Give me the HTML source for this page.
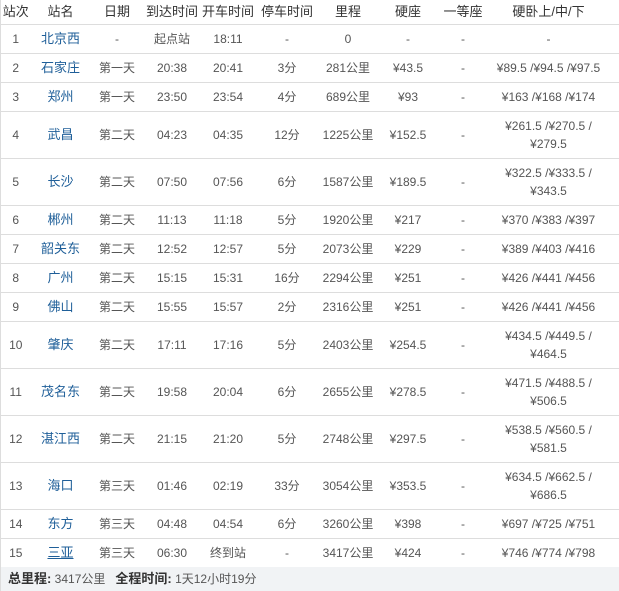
<!DOCTYPE html>
<html><head><meta charset="utf-8">
<style>
*{margin:0;padding:0;box-sizing:border-box}
body{width:619px;height:591px;background:#fff;overflow:hidden;font-family:"Liberation Sans","Noto Sans CJK SC",sans-serif;font-size:12px;color:#555}
table{border-collapse:collapse;table-layout:fixed;width:619px;border-left:1px solid #ddd}
td,th{text-align:center;vertical-align:middle;border-bottom:1px solid #ddd;font-weight:normal;padding:0;line-height:18px;white-space:nowrap}
th{height:24px;color:#333;font-size:13px}
tr.s td{height:29px}
tr.d td{height:47px}
a{color:#1f5f99;text-decoration:none;font-size:13px}
.foot{position:absolute;left:0;top:567px;width:619px;height:24px;background:#f1f3f5;border-left:1px solid #ddd;padding-left:7px;line-height:24px;color:#555;font-size:12px}
.foot b{color:#333;font-size:13px}
</style></head><body>
<table>
<colgroup><col style="width:30px"><col style="width:60px"><col style="width:53px"><col style="width:57px"><col style="width:55px"><col style="width:63px"><col style="width:59px"><col style="width:61px"><col style="width:49px"><col style="width:122px"><col style="width:10px"></colgroup>
<tr><th>站次</th><th>站名</th><th>日期</th><th>到达时间</th><th>开车时间</th><th>停车时间</th><th>里程</th><th>硬座</th><th>一等座</th><th>硬卧上/中/下</th><th></th></tr>
<tr class="s"><td>1</td><td><a>北京西</a></td><td>-</td><td>起点站</td><td>18:11</td><td>-</td><td>0</td><td>-</td><td>-</td><td>-</td><td></td></tr>
<tr class="s"><td>2</td><td><a>石家庄</a></td><td>第一天</td><td>20:38</td><td>20:41</td><td>3分</td><td>281公里</td><td>¥43.5</td><td>-</td><td>¥89.5 /¥94.5 /¥97.5</td><td></td></tr>
<tr class="s"><td>3</td><td><a>郑州</a></td><td>第一天</td><td>23:50</td><td>23:54</td><td>4分</td><td>689公里</td><td>¥93</td><td>-</td><td>¥163 /¥168 /¥174</td><td></td></tr>
<tr class="d"><td>4</td><td><a>武昌</a></td><td>第二天</td><td>04:23</td><td>04:35</td><td>12分</td><td>1225公里</td><td>¥152.5</td><td>-</td><td>¥261.5 /¥270.5 /<br>¥279.5</td><td></td></tr>
<tr class="d"><td>5</td><td><a>长沙</a></td><td>第二天</td><td>07:50</td><td>07:56</td><td>6分</td><td>1587公里</td><td>¥189.5</td><td>-</td><td>¥322.5 /¥333.5 /<br>¥343.5</td><td></td></tr>
<tr class="s"><td>6</td><td><a>郴州</a></td><td>第二天</td><td>11:13</td><td>11:18</td><td>5分</td><td>1920公里</td><td>¥217</td><td>-</td><td>¥370 /¥383 /¥397</td><td></td></tr>
<tr class="s"><td>7</td><td><a>韶关东</a></td><td>第二天</td><td>12:52</td><td>12:57</td><td>5分</td><td>2073公里</td><td>¥229</td><td>-</td><td>¥389 /¥403 /¥416</td><td></td></tr>
<tr class="s"><td>8</td><td><a>广州</a></td><td>第二天</td><td>15:15</td><td>15:31</td><td>16分</td><td>2294公里</td><td>¥251</td><td>-</td><td>¥426 /¥441 /¥456</td><td></td></tr>
<tr class="s"><td>9</td><td><a>佛山</a></td><td>第二天</td><td>15:55</td><td>15:57</td><td>2分</td><td>2316公里</td><td>¥251</td><td>-</td><td>¥426 /¥441 /¥456</td><td></td></tr>
<tr class="d"><td>10</td><td><a>肇庆</a></td><td>第二天</td><td>17:11</td><td>17:16</td><td>5分</td><td>2403公里</td><td>¥254.5</td><td>-</td><td>¥434.5 /¥449.5 /<br>¥464.5</td><td></td></tr>
<tr class="d"><td>11</td><td><a>茂名东</a></td><td>第二天</td><td>19:58</td><td>20:04</td><td>6分</td><td>2655公里</td><td>¥278.5</td><td>-</td><td>¥471.5 /¥488.5 /<br>¥506.5</td><td></td></tr>
<tr class="d"><td>12</td><td><a>湛江西</a></td><td>第二天</td><td>21:15</td><td>21:20</td><td>5分</td><td>2748公里</td><td>¥297.5</td><td>-</td><td>¥538.5 /¥560.5 /<br>¥581.5</td><td></td></tr>
<tr class="d"><td>13</td><td><a>海口</a></td><td>第三天</td><td>01:46</td><td>02:19</td><td>33分</td><td>3054公里</td><td>¥353.5</td><td>-</td><td>¥634.5 /¥662.5 /<br>¥686.5</td><td></td></tr>
<tr class="s"><td>14</td><td><a>东方</a></td><td>第三天</td><td>04:48</td><td>04:54</td><td>6分</td><td>3260公里</td><td>¥398</td><td>-</td><td>¥697 /¥725 /¥751</td><td></td></tr>
<tr class="s"><td>15</td><td><a style="text-decoration:underline">三亚</a></td><td>第三天</td><td>06:30</td><td>终到站</td><td>-</td><td>3417公里</td><td>¥424</td><td>-</td><td>¥746 /¥774 /¥798</td><td></td></tr>
</table>
<div class="foot"><b>总里程:</b> 3417公里 &nbsp; <b>全程时间:</b> 1天12小时19分</div>
</body></html>
